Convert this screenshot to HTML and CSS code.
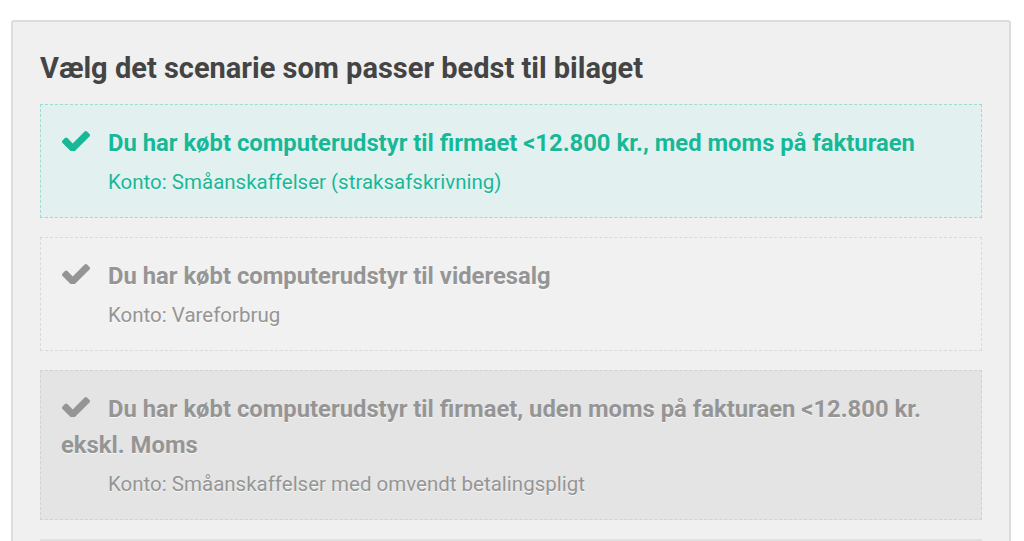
FILE: index.html
```html
<!DOCTYPE html>
<html lang="da">
<head>
    <meta charset="UTF-8">
    <meta name="viewport" content="width=device-width, initial-scale=1.0">
    <link rel="stylesheet" href="styles.css">
    <title>Scenarie</title>
</head>
<body>
    <div class="panel">
        <h2>Vælg det scenarie som passer bedst til bilaget</h2>

        <div class="option selected">
            <div class="title">
                <svg class="check" viewBox="121 330 1550 1056"><path d="M1671 566q0 40-28 68l-724 724-136 136q-28 28-68 28t-68-28l-136-136-362-362q-28-28-28-68t28-68l136-136q28-28 68-28t68 28l294 295 656-657q28-28 68-28t68 28l136 136q28 28 28 68z"/></svg>Du har købt computerudstyr til firmaet &lt;12.800 kr., med moms på fakturaen
            </div>
            <div class="account">Konto: Småanskaffelser (straksafskrivning)</div>
        </div>

        <div class="option">
            <div class="title">
                <svg class="check" viewBox="121 330 1550 1056"><path d="M1671 566q0 40-28 68l-724 724-136 136q-28 28-68 28t-68-28l-136-136-362-362q-28-28-28-68t28-68l136-136q28-28 68-28t68 28l294 295 656-657q28-28 68-28t68 28l136 136q28 28 28 68z"/></svg>Du har købt computerudstyr til videresalg
            </div>
            <div class="account">Konto: Vareforbrug</div>
        </div>

        <div class="option hover">
            <div class="title">
                <svg class="check" viewBox="121 330 1550 1056"><path d="M1671 566q0 40-28 68l-724 724-136 136q-28 28-68 28t-68-28l-136-136-362-362q-28-28-28-68t28-68l136-136q28-28 68-28t68 28l294 295 656-657q28-28 68-28t68 28l136 136q28 28 28 68z"/></svg>Du har købt computerudstyr til firmaet, uden moms på fakturaen &lt;12.800 kr. ekskl. Moms
            </div>
            <div class="account">Konto: Småanskaffelser med omvendt betalingspligt</div>
        </div>

        <div class="divider"></div>
    </div>
</body>
</html>
```

FILE: styles.css
```css
* {
  box-sizing: border-box;
  margin: 0;
  padding: 0;
}

body {
  font-family: Roboto, "Liberation Sans", Arial, sans-serif;
  background: #fff;
  padding: 20px 13px 0 11px;
  overflow: hidden;
}

.panel {
  background: #f0f0f0;
  border: 2px solid #dcdcdc;
  border-radius: 3px;
  padding: 26px 27px 40px 27px;
}

h2 {
  font-size: 29px;
  font-weight: 700;
  color: #444;
  line-height: 40px;
  margin-bottom: 16px;
}

.option {
  border: 1px dashed #d9d9d9;
  background: #f1f1f1;
  padding: 20px 20px 21px 20px;
  margin-bottom: 19px;
  color: #959595;
  text-shadow: 0 1px 0 rgba(255, 255, 255, 0.7);
}

.option.selected {
  background: #e2f1f0;
  border-color: #9fdbd1;
  color: #17b897;
}

.option.hover {
  background: #e4e4e4;
  border-color: #d2d2d2;
}

.title {
  font-size: 23.8px;
  font-weight: 700;
  line-height: 36px;
}

.check {
  width: 28px;
  height: 21px;
  fill: currentColor;
  vertical-align: 0;
  margin-left: 1px;
  margin-right: 18px;
}

.account {
  font-size: 20.5px;
  line-height: 28px;
  margin-top: 7px;
  padding-left: 47px;
}

.divider {
  border-top: 2px solid #e0e0e0;
  height: 40px;
  background: #ececec;
}
```
